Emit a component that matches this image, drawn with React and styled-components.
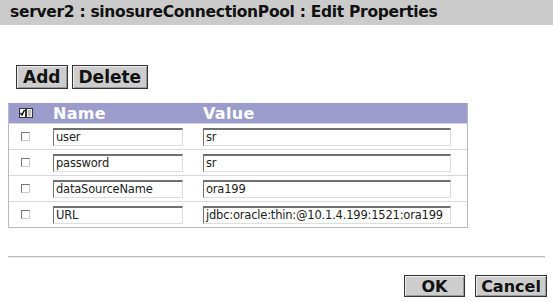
import React from "react";
import styled, { createGlobalStyle } from "styled-components";

const GlobalStyle = createGlobalStyle`
  html, body {
    margin: 0;
    padding: 0;
    background: #fff;
    font-family: "DejaVu Sans", Verdana, sans-serif;
  }
`;

const rows = [
  { name: "user", value: "sr" },
  { name: "password", value: "sr" },
  { name: "dataSourceName", value: "ora199" },
  { name: "URL", value: "jdbc:oracle:thin:@10.1.4.199:1521:ora199" },
];

const App = () => {
  return (
    <Page>
      <GlobalStyle />
      <TitleBar>server2 : sinosureConnectionPool : Edit Properties</TitleBar>
      <Toolbar>
        <Button>Add</Button>
        <Button>Delete</Button>
      </Toolbar>
      <Table>
        <HeaderRow>
          <CheckCell>
            <SelectAllIcon />
          </CheckCell>
          <HeadCell>Name</HeadCell>
          <HeadCell>Value</HeadCell>
        </HeaderRow>
        {rows.map((r) => (
          <Row key={r.name}>
            <CheckCell>
              <Box />
            </CheckCell>
            <Cell>
              <Field $width={130}>{r.name}</Field>
            </Cell>
            <Cell>
              <Field $width={248}>{r.value}</Field>
            </Cell>
          </Row>
        ))}
      </Table>
      <Divider />
      <Footer>
        <FooterButton $width={61}>OK</FooterButton>
        <FooterButton $width={72}>Cancel</FooterButton>
      </Footer>
    </Page>
  );
};

const SelectAllIcon = () => (
  <svg width="14" height="10" viewBox="0 0 14 10">
    <rect x="0.5" y="0.5" width="6" height="9" fill="#fff" stroke="#333" />
    <path d="M1.5 5 L3 7 L5.5 2" stroke="#000" strokeWidth="1.4" fill="none" />
    <rect x="7.5" y="0.5" width="6" height="9" fill="#eee" stroke="#333" />
    <path d="M9 3h3M9 5h3M9 7h3" stroke="#888" strokeWidth="1" />
  </svg>
);

const Page = styled.div`
  width: 553px;
  height: 301px;
  overflow: hidden;
`;

const TitleBar = styled.div`
  height: 25px;
  background: #cbcbcb;
  padding-left: 10px;
  font-weight: bold;
  font-size: 15.5px;
  line-height: 25px;
  letter-spacing: -0.3px;
  color: #111;
  white-space: nowrap;
`;

const Toolbar = styled.div`
  display: flex;
  gap: 4px;
  padding: 40px 0 0 16px;
  height: 24px;
`;

const Button = styled.div`
  box-sizing: border-box;
  height: 24px;
  padding: 0 6px;
  display: flex;
  align-items: center;
  justify-content: center;
  background: #cdcdcd;
  border: 1px solid #333;
  box-shadow: inset 1px 1px 0 #eee, inset -1px -1px 0 #999;
  font-weight: bold;
  font-size: 17px;
  color: #111;
`;

const FooterButton = styled(Button)`
  width: ${({ $width }) => $width}px;
  height: 22px;
  padding: 0;
  font-size: 16px;
`;

const Table = styled.div`
  margin: 14px 0 0 8px;
  width: 458px;
  border: 1px solid #b8b8d4;
  border-top: none;
`;

const HeaderRow = styled.div`
  display: grid;
  grid-template-columns: 44px 150px 1fr;
  align-items: center;
  height: 20px;
  background: #9c9ccc;
`;

const Row = styled.div`
  display: grid;
  grid-template-columns: 44px 150px 1fr;
  align-items: center;
  height: 26px;
  border-top: 1px solid #d6d6e4;
  box-sizing: border-box;
`;

const CheckCell = styled.div`
  display: flex;
  align-items: center;
  padding-left: 10px;
`;

const HeadCell = styled.div`
  color: #fff;
  font-weight: bold;
  font-size: 16px;
  letter-spacing: 0.3px;
`;

const Cell = styled.div`
  display: flex;
  align-items: center;
`;

const Box = styled.span`
  width: 7px;
  height: 7px;
  margin-left: 2px;
  border: 1px solid #777;
  border-right-color: #ccc;
  border-bottom-color: #ccc;
  background: #fff;
`;

const Field = styled.div`
  box-sizing: border-box;
  width: ${({ $width }) => $width}px;
  height: 18px;
  padding-left: 2px;
  border-top: 2px solid #707070;
  border-left: 1px solid #707070;
  border-right: 1px solid #ddd;
  border-bottom: 1px solid #ddd;
  font-size: 11.5px;
  letter-spacing: -0.2px;
  line-height: 15px;
  color: #222;
  white-space: nowrap;
  overflow: hidden;
`;

const Divider = styled.div`
  margin: 28px 8px 0 8px;
  height: 1px;
  background: #bbb;
  border-bottom: 1px solid #eee;
`;

const Footer = styled.div`
  display: flex;
  justify-content: flex-end;
  gap: 10px;
  padding: 17px 6px 0 0;
`;

export default App;
